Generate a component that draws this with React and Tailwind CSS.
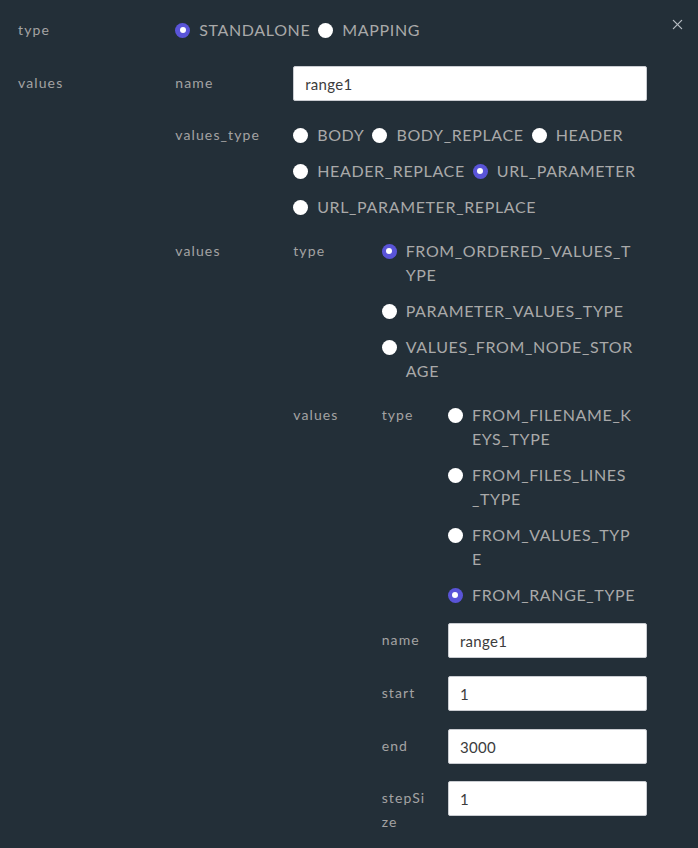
import { useState } from 'react'

function Radio({ checked }) {
  if (checked) {
    return (
      <span className="mt-[4.5px] flex h-[15px] w-[15px] shrink-0 items-center justify-center rounded-full bg-[#5a54d8]">
        <span className="h-[6px] w-[6px] rounded-full bg-white" />
      </span>
    )
  }
  return <span className="mt-[4.5px] h-[15px] w-[15px] shrink-0 rounded-full bg-white" />
}

function Option({ lines, checked }) {
  return (
    <div className="flex items-start gap-[9px]">
      <Radio checked={checked} />
      <span className="text-[16px] leading-6 tracking-[0.04em] text-[#a9a9a9]">
        {lines.map((line, i) => (
          <span key={i} className="block">{line}</span>
        ))}
      </span>
    </div>
  )
}

function Label({ children, pad = false }) {
  return (
    <div className={`text-[14px] leading-6 tracking-[0.08em] text-[#a3a3a3] ${pad ? 'pt-[5px]' : ''}`}>
      {children.map ? children.map((c, i) => <span key={i} className="block">{c}</span>) : children}
    </div>
  )
}

function Row({ label, pad, className = '', children }) {
  return (
    <div className={`grid grid-cols-[1fr_3fr] items-start ${className}`}>
      <Label pad={pad}>{label}</Label>
      <div>{children}</div>
    </div>
  )
}

function TextInput({ value }) {
  const [text, setText] = useState(value)
  return (
    <input
      value={text}
      onChange={(e) => setText(e.target.value)}
      className="block h-[35px] w-full rounded-[2px] border border-[#c9ccd1] bg-white px-[11px] text-[15px] tracking-[0.02em] text-[#3c3c3c] outline-none"
    />
  )
}

function StackedOptions({ items }) {
  return (
    <div className="flex flex-col gap-[12px]">
      {items.map((item) => (
        <Option key={item.lines.join('')} lines={item.lines} checked={item.checked} />
      ))}
    </div>
  )
}

export default function App() {
  return (
    <div className="relative min-h-[848px] w-[698px] bg-[#232f38] pt-[18px] font-['Lato',sans-serif]">
      <button className="absolute right-[15px] top-[18px] flex h-[12px] w-[12px] items-center justify-center text-[#b8bcc2]">
        <svg viewBox="0 0 12 12" className="h-[11px] w-[11px]" fill="none" stroke="currentColor" strokeWidth="1.4" strokeLinecap="round">
          <path d="M1.5 1.5l9 9" />
          <path d="M10.5 1.5l-9 9" />
        </svg>
      </button>

      <div className="ml-[18px] w-[629px]">
        <Row label="type">
          <div className="flex flex-wrap gap-x-[8px]">
            <Option lines={['STANDALONE']} checked />
            <Option lines={['MAPPING']} />
          </div>
        </Row>

        <Row label="values" pad className="mt-[24px]">
          <Row label="name" pad>
            <TextInput value="range1" />
          </Row>

          <Row label="values_type" className="mt-[22px]">
            <div className="flex flex-wrap gap-x-[8px] gap-y-[12px]">
              <Option lines={['BODY']} />
              <Option lines={['BODY_REPLACE']} />
              <Option lines={['HEADER']} />
              <Option lines={['HEADER_REPLACE']} />
              <Option lines={['URL_PARAMETER']} checked />
              <Option lines={['URL_PARAMETER_REPLACE']} />
            </div>
          </Row>

          <Row label="values" className="mt-[20px]">
            <Row label="type">
              <StackedOptions
                items={[
                  { lines: ['FROM_ORDERED_VALUES_T', 'YPE'], checked: true },
                  { lines: ['PARAMETER_VALUES_TYPE'] },
                  { lines: ['VALUES_FROM_NODE_STOR', 'AGE'] },
                ]}
              />
            </Row>

            <Row label="values" className="mt-[20px]">
              <Row label="type">
                <StackedOptions
                  items={[
                    { lines: ['FROM_FILENAME_K', 'EYS_TYPE'] },
                    { lines: ['FROM_FILES_LINES', '_TYPE'] },
                    { lines: ['FROM_VALUES_TYP', 'E'] },
                    { lines: ['FROM_RANGE_TYPE'], checked: true },
                  ]}
                />
              </Row>

              <Row label="name" pad className="mt-[16px]">
                <TextInput value="range1" />
              </Row>
              <Row label="start" pad className="mt-[18px]">
                <TextInput value="1" />
              </Row>
              <Row label="end" pad className="mt-[18px]">
                <TextInput value="3000" />
              </Row>
              <Row label={['stepSi', 'ze']} pad className="mt-[17px]">
                <TextInput value="1" />
              </Row>
            </Row>
          </Row>
        </Row>
      </div>
    </div>
  )
}
